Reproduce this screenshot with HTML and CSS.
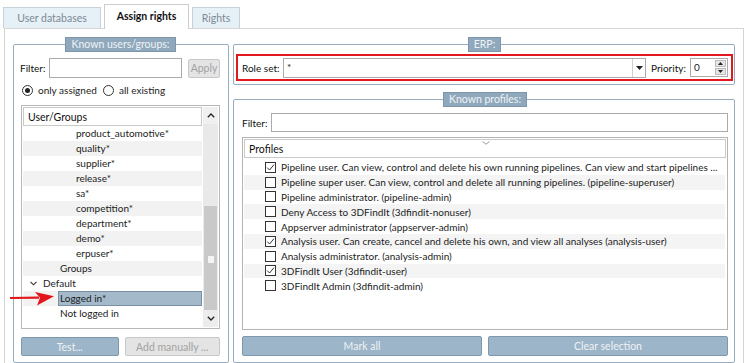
FILE: index.html
```html
<!DOCTYPE html>
<html>
<head>
<meta charset="utf-8">
<link rel="stylesheet" href="styles.css">
</head>
<body>
<div class="tabs">
  <div class="tab db">User databases</div>
  <div class="tab active">Assign rights</div>
  <div class="tab rights">Rights</div>
</div>
<div class="panel">
  <fieldset class="group left">
    <legend>Known users/groups:</legend>
    <div class="filter-row">
      <span class="lbl">Filter:</span>
      <div class="input left-input"></div>
      <div class="btn disabled apply">Apply</div>
    </div>
    <div class="radio-row">
      <span class="radio checked"></span><span class="rtext">only assigned</span>
      <span class="radio"></span><span class="rtext">all existing</span>
    </div>
    <div class="tree">
      <div class="tree-main">
        <div class="colhead">User/Groups</div>
        <div class="row l3">product_automotive*</div>
        <div class="row l3 alt">quality*</div>
        <div class="row l3">supplier*</div>
        <div class="row l3 alt">release*</div>
        <div class="row l3">sa*</div>
        <div class="row l3 alt">competition*</div>
        <div class="row l3">department*</div>
        <div class="row l3 alt">demo*</div>
        <div class="row l3">erpuser*</div>
        <div class="row l2 alt">Groups</div>
        <div class="row l1"><svg class="chev" width="7" height="5" viewBox="0 0 7 5"><path d="M0.5 0.8 L3.5 3.8 L6.5 0.8" fill="none" stroke="#333" stroke-width="1.1"/></svg>Default</div>
        <div class="row alt sel-row"><span class="sel">Logged in*</span></div>
        <div class="row l2">Not logged in</div>
      </div>
      <div class="vscroll">
        <div class="sb-btn"><svg width="8" height="5" viewBox="0 0 8 5"><path d="M0.8 4.2 L4 1 L7.2 4.2" fill="none" stroke="#222" stroke-width="1.3"/></svg></div>
        <div class="sb-track"></div>
        <div class="sb-thumb"><span class="grip"></span></div>
        <div class="sb-btn down"><svg width="8" height="5" viewBox="0 0 8 5"><path d="M0.8 0.8 L4 4 L7.2 0.8" fill="none" stroke="#222" stroke-width="1.3"/></svg></div>
      </div>
    </div>
    <div class="btn-row">
      <div class="btn primary test">Test...</div>
      <div class="btn disabled add">Add manually ...</div>
    </div>
  </fieldset>

  <div class="right">
    <fieldset class="group erp">
      <legend>ERP:</legend>
      <div class="redbox">
        <span class="lbl role">Role set:</span>
        <div class="combo">
          <span class="combo-text">*</span>
          <span class="combo-arrow"><svg width="7" height="4" viewBox="0 0 7 4"><path d="M0 0 L7 0 L3.5 4 Z" fill="#222"/></svg></span>
        </div>
        <span class="lbl prio">Priority:</span>
        <div class="spin">
          <span class="spin-text">0</span>
          <span class="spin-btns">
            <span class="sbtn"><svg width="5" height="3" viewBox="0 0 5 3"><path d="M0 3 L5 3 L2.5 0 Z" fill="#222"/></svg></span>
            <span class="sbtn"><svg width="5" height="3" viewBox="0 0 5 3"><path d="M0 0 L5 0 L2.5 3 Z" fill="#222"/></svg></span>
          </span>
        </div>
      </div>
    </fieldset>

    <fieldset class="group profiles">
      <legend>Known profiles:</legend>
      <div class="filter-row pf">
        <span class="lbl plbl">Filter:</span>
        <div class="input right-input"></div>
      </div>
      <div class="plist">
        <div class="colhead phead">Profiles<svg class="sortind" width="8" height="4" viewBox="0 0 8 4"><path d="M0.5 0.5 L4 3.2 L7.5 0.5" fill="none" stroke="#9a9a9a" stroke-width="1"/></svg></div>
        <div class="prow"><span class="cb on"><svg width="9" height="9" viewBox="0 0 9 9"><path d="M1.2 4.6 L3.6 7 L8 1.6" fill="none" stroke="#333" stroke-width="1"/></svg></span>Pipeline user. Can view, control and delete his own running pipelines. Can view and start pipelines ...</div>
        <div class="prow alt"><span class="cb"></span>Pipeline super user. Can view, control and delete all running pipelines. (pipeline-superuser)</div>
        <div class="prow"><span class="cb"></span>Pipeline administrator. (pipeline-admin)</div>
        <div class="prow alt"><span class="cb"></span>Deny Access to 3DFindIt (3dfindit-nonuser)</div>
        <div class="prow"><span class="cb"></span>Appserver administrator (appserver-admin)</div>
        <div class="prow alt"><span class="cb on"><svg width="9" height="9" viewBox="0 0 9 9"><path d="M1.2 4.6 L3.6 7 L8 1.6" fill="none" stroke="#333" stroke-width="1"/></svg></span>Analysis user. Can create, cancel and delete his own, and view all analyses (analysis-user)</div>
        <div class="prow"><span class="cb"></span>Analysis administrator. (analysis-admin)</div>
        <div class="prow alt"><span class="cb on"><svg width="9" height="9" viewBox="0 0 9 9"><path d="M1.2 4.6 L3.6 7 L8 1.6" fill="none" stroke="#333" stroke-width="1"/></svg></span>3DFindIt User (3dfindit-user)</div>
        <div class="prow"><span class="cb"></span>3DFindIt Admin (3dfindit-admin)</div>
      </div>
      <div class="btn-row pbtns">
        <div class="btn primary grow">Mark all</div>
        <div class="btn primary grow">Clear selection</div>
      </div>
    </fieldset>
  </div>

  <svg class="redarrow" width="50" height="20" viewBox="0 0 50 20">
    <path d="M2 10 L31 9.6" stroke="#e3161c" stroke-width="2.2" fill="none"/>
    <path d="M27 4 L46 8.3 L29 17.5 L32 9.8 Z" fill="#e3161c"/>
  </svg>
</div>
</body>
</html>
```

FILE: styles.css
```css
* { box-sizing: border-box; }
html, body { margin: 0; padding: 0; }
body {
  width: 750px;
  height: 363px;
  overflow: hidden;
  background: #fff;
  font-family: Lato, "Open Sans", sans-serif;
  font-size: 10px;
  color: #1c1c1c;
}

/* tabs */
.tabs {
  height: 28px;
  display: flex;
  align-items: flex-end;
  gap: 3px;
  padding-left: 3px;
  position: relative;
  z-index: 1;
}
.tab {
  height: 21px;
  border: 1px solid #c6d1da;
  border-bottom: none;
  background: #e6f0f7;
  color: #7d8a95;
  display: flex;
  align-items: center;
  justify-content: center;
  font-size: 10.5px;
}
.tab.db { width: 98px; }
.tab.rights { width: 48px; }
.tab.active {
  width: 85px;
  height: 25px;
  margin-bottom: -1px;
  background: #fff;
  border-color: #cdcdcd;
  color: #111;
  font-weight: bold;
  padding-bottom: 2px;
}

/* main panel */
.panel {
  margin-left: 4px;
  width: 740px;
  height: 335px;
  border: 1px solid #d5d5d5;
  border-bottom: none;
  display: flex;
  align-items: flex-start;
  gap: 4px;
  padding: 8px 0 0 8px;
  position: relative;
  background: #fff;
}

fieldset.group {
  margin: 0;
  padding: 0;
  min-width: 0;
  border: 1px solid #97adbf;
  border-radius: 2px;
}
fieldset.group legend {
  margin: 0 auto;
  padding: 0 5px;
  height: 15px;
  line-height: 13px;
  background: #8fa8bc;
  border: 1px solid #7d96ab;
  color: #f0f4f7;
  font-size: 10.5px;
}

/* left group */
.left {
  width: 216px;
  padding: 0 8px 6px 7px !important;
}
.filter-row {
  margin-top: 6px;
  height: 20px;
  display: flex;
  align-items: center;
}
.lbl { color: #111; }
.left .lbl { width: 29px; margin-left: -1px; }
.input {
  height: 20px;
  border: 1px solid #ababab;
  background: #fff;
}
.left-input { width: 133px; }
.btn {
  height: 20px;
  border-radius: 2px;
  display: flex;
  align-items: center;
  justify-content: center;
  font-size: 10.5px;
}
.btn.disabled {
  background: #e4e4e4;
  border: 1px solid #c8c8c8;
  color: #a2a2a2;
}
.btn.primary {
  background: #9db5c8;
  border: 1px solid #7e98ad;
  color: #eef2f6;
}
.apply { width: 32px; margin-left: 6px; height: 19px; }

.radio-row {
  margin-top: 6px;
  height: 12px;
  display: flex;
  align-items: center;
}
.radio {
  width: 11px;
  height: 11px;
  border: 1px solid #333;
  border-radius: 50%;
  margin-left: 1px;
  display: flex;
  align-items: center;
  justify-content: center;
}
.radio.checked::after {
  content: "";
  width: 5px;
  height: 5px;
  border-radius: 50%;
  background: #222;
}
.rtext { margin-left: 5px; width: 64px; }

.tree {
  margin-top: 9px;
  height: 224px;
  border: 1px solid #b8b8b8;
  padding: 1px;
  display: flex;
  background: #fff;
}
.tree-main {
  flex: 1;
  overflow: hidden;
}
.colhead {
  height: 19px;
  border: 1px solid #c9c9c9;
  padding-left: 4px;
  display: flex;
  align-items: center;
  font-size: 10.5px;
  color: #111;
}
.row {
  height: 15px;
  line-height: 15px;
  white-space: nowrap;
  display: flex;
  align-items: center;
}
.row.alt { background: #f2f2f2; }
.row.l3 { padding-left: 53px; }
.row.l2 { padding-left: 37px; }
.row.l1 { padding-left: 7px; }
.chev { margin-right: 6px; }
.sel-row { padding-left: 35px; }
.sel {
  flex: 1;
  height: 15px;
  background: #a4bacb;
  border: 1px solid #7990a4;
  padding-left: 1px;
  display: flex;
  align-items: center;
}
.tree-main .row:first-of-type { margin-top: 0; }

.vscroll {
  width: 15px;
  margin-left: 1px;
  display: flex;
  flex-direction: column;
  background: #ececec;
}
.sb-btn {
  height: 17px;
  display: flex;
  align-items: center;
  justify-content: center;
  background: #f0f0f0;
}
.sb-track {
  height: 82px;
  background: #e9e9e9;
}
.sb-thumb {
  flex: 1;
  background: #c9c9c9;
  margin: 0 1px;
  display: flex;
  justify-content: center;
  padding-top: 50px;
}
.grip {
  width: 6px;
  height: 7px;
  background: #f4f4f4;
}
.sb-btn.down { background: #ececec; }

.btn-row {
  margin-top: 8px;
  display: flex;
  gap: 6px;
}
.test { width: 98px; height: 19px; }
.add { width: 96px; height: 19px; }

/* right column */
.right {
  width: 502px;
  display: flex;
  flex-direction: column;
}
.erp {
  padding: 0 1px 3px 2px !important;
}
.redbox {
  margin-top: 2px;
  height: 27px;
  border: 2px solid #e3171d;
  display: flex;
  align-items: center;
  padding-left: 4px;
}
.role { width: 41px; }
.combo {
  width: 363px;
  height: 20px;
  border: 1px solid #ababab;
  display: flex;
  background: #fff;
}
.combo-text { flex: 1; padding-left: 3px; line-height: 16px; }
.combo-arrow {
  width: 13px;
  border-left: 1px solid #d0d0d0;
  display: flex;
  align-items: center;
  justify-content: center;
}
.prio { margin-left: 5px; width: 39px; }
.spin {
  width: 38px;
  height: 19px;
  border: 1px solid #ababab;
  display: flex;
  background: #fff;
}
.spin-text { flex: 1; padding-left: 3px; line-height: 16px; }
.spin-btns {
  width: 11px;
  margin: 1px;
  display: flex;
  flex-direction: column;
  gap: 1px;
}
.sbtn {
  flex: 1;
  background: #e5e5e5;
  border: 1px solid #bdbdbd;
  display: flex;
  align-items: center;
  justify-content: center;
}

.profiles {
  margin-top: 7px !important;
  padding: 0 6px 6px 8px !important;
}
.pf { margin-top: 6px; height: 19px; }
.plbl { width: 29px; }
.right-input { flex: 1; height: 19px; }
.plist {
  margin-top: 5px;
  height: 193px;
  border: 1px solid #b4b4b4;
  padding: 1px;
  background: #fff;
}
.phead { position: relative; }
.sortind {
  position: absolute;
  left: 237px;
  top: 1px;
}
.prow {
  height: 14.8px;
  display: flex;
  align-items: center;
  padding-left: 21px;
  white-space: nowrap;
  overflow: hidden;
  margin-right: 1px;
}
.phead + .prow { margin-top: 2px; }
.prow.alt { background: #f4f4f4; }
.cb {
  width: 11px;
  height: 11px;
  border: 1px solid #333;
  background: #fff;
  margin-right: 5px;
  flex: none;
  display: flex;
  align-items: center;
  justify-content: center;
}
.pbtns { margin-top: 6px; }
.grow { flex: 1; height: 20px; }

.redarrow {
  position: absolute;
  left: 3px;
  top: 259px;
}
```
